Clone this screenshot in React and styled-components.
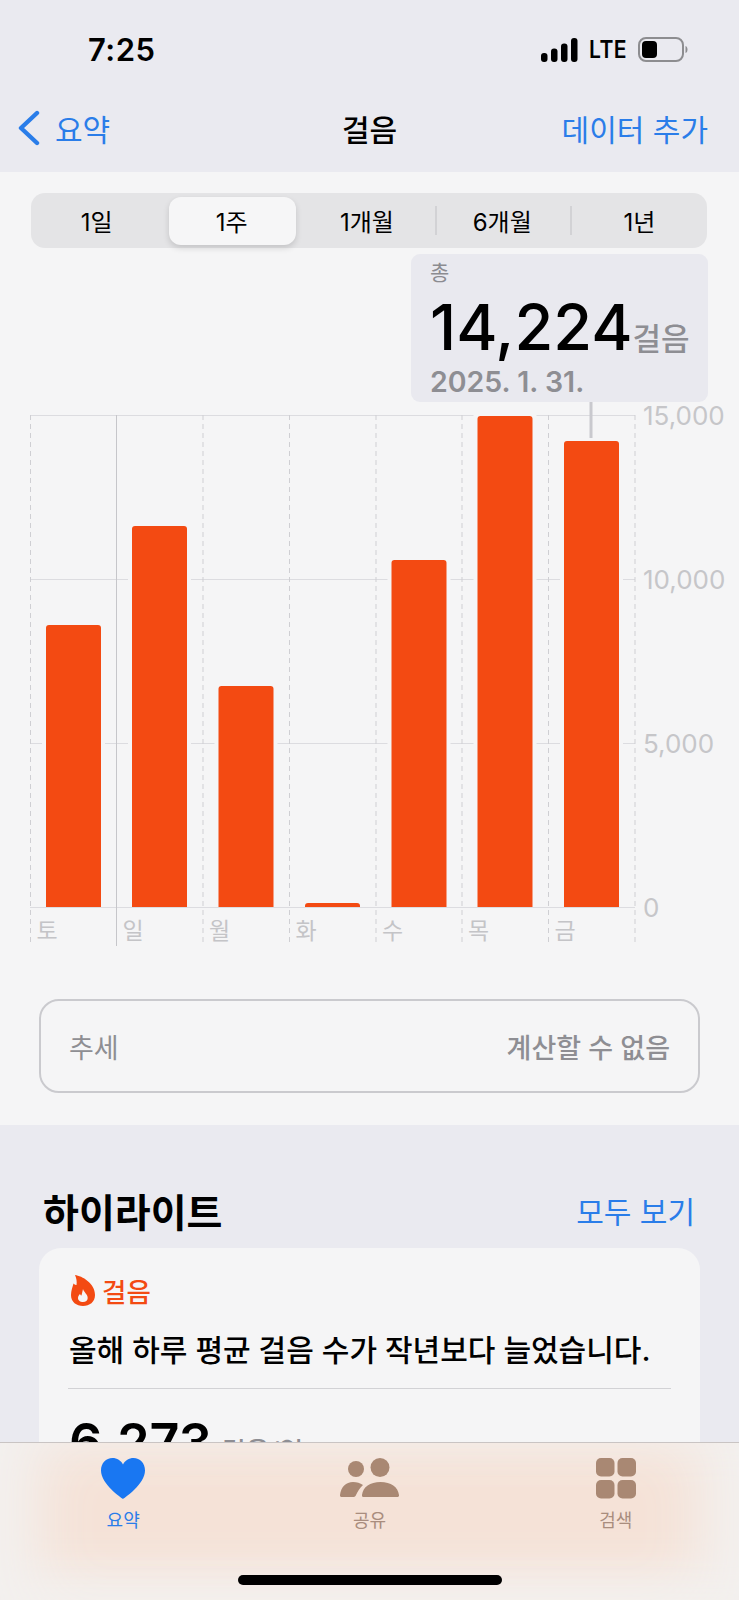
import React from "react";
import styled, { createGlobalStyle } from "styled-components";

const FONT = `Inter, "Noto Sans CJK KR", sans-serif`;
const BLUE = "#2a7de9";
const ORANGE = "#f34a12";
const PANEL = "#f5f5f6";

const GlobalStyle = createGlobalStyle`
  html, body {
    margin: 0;
    background: #eaeaf0;
  }
  body {
    font-family: ${FONT};
    color: #000;
  }
`;

const Phone = styled.div`
  position: relative;
  width: 739px;
  height: 1600px;
  overflow: hidden;
  background: #eaeaf0;
`;

const StatusBar = styled.div`
  display: flex;
  align-items: center;
  justify-content: space-between;
  height: 99px;
  padding: 0 51px 0 88px;
  box-sizing: border-box;
`;

const Time = styled.span`
  font-size: 31px;
  font-weight: 600;
  letter-spacing: 0.5px;
`;

const StatusRight = styled.div`
  display: flex;
  align-items: center;
  gap: 11px;
`;

const Lte = styled.span`
  font-size: 24px;
  font-weight: 600;
  letter-spacing: 0.5px;
  transform: scaleX(0.88);
  transform-origin: left center;
  width: 38px;
`;

const NavBar = styled.div`
  display: grid;
  grid-template-columns: 1fr auto 1fr;
  align-items: center;
  height: 73px;
  padding: 0 31px 15px;
  box-sizing: border-box;
`;

const BackLink = styled.div`
  display: flex;
  align-items: center;
  gap: 15px;
  margin-left: -14px;
  color: ${BLUE};
  font-size: 30px;
`;

const NavTitle = styled.div`
  font-size: 30px;
  font-weight: 500;
`;

const NavAction = styled.div`
  justify-self: end;
  color: ${BLUE};
  font-size: 30px;
`;

const ChartSection = styled.section`
  background: ${PANEL};
  padding: 21px 0 32px;
`;

const Segmented = styled.div`
  display: grid;
  grid-template-columns: repeat(5, 1fr);
  align-items: center;
  height: 55px;
  margin: 0 32px 0 31px;
  border-radius: 14px;
  background: #e4e4e6;
`;

const Segment = styled.div`
  position: relative;
  display: flex;
  align-items: center;
  justify-content: center;
  height: ${(p) => (p.$active ? "48px" : "100%")};
  margin: ${(p) => (p.$active ? "0 5px 0 3px" : "0")};
  padding-right: ${(p) => (p.$last ? "0" : p.$active ? "2px" : "4px")};
  border-radius: 12px;
  font-size: 24px;
  background: ${(p) => (p.$active ? "#f6f6f7" : "transparent")};
  box-shadow: ${(p) => (p.$active ? "0 3px 6px rgba(0,0,0,0.14)" : "none")};

  &::after {
    content: "";
    display: ${(p) => (p.$divider ? "block" : "none")};
    position: absolute;
    right: 0;
    top: 13px;
    bottom: 13px;
    width: 2px;
    background: #d2d2d5;
  }
`;

const ChartWrap = styled.div`
  position: relative;
  height: 700px;
`;

const Plot = styled.svg`
  display: block;
`;

const AxisLabel = styled.text`
  font-family: ${FONT};
  font-size: 26px;
  fill: #c6c6c9;
`;

const DayLabel = styled.text`
  font-family: ${FONT};
  font-size: 23px;
  fill: #c4c4c7;
`;

const Callout = styled.div`
  position: absolute;
  left: 411px;
  top: 6px;
  width: 297px;
  height: 148px;
  box-sizing: border-box;
  padding: 2px 0 0 19px;
  border-radius: 9px;
  background: #e9e9ef;
`;

const CalloutCaption = styled.div`
  font-size: 21px;
  line-height: 34px;
  color: #8b8b90;
`;

const CalloutValue = styled.div`
  display: flex;
  align-items: baseline;
  height: 70px;
  margin-top: 2px;
  line-height: 70px;
  font-size: 63px;
  font-weight: 500;
`;

const CalloutUnit = styled.span`
  font-size: 31px;
  font-weight: 500;
  color: #8e8e93;
`;

const CalloutDate = styled.div`
  font-size: 28.5px;
  line-height: 40px;
  font-weight: 600;
  color: #8e8e93;
`;

const TrendCard = styled.div`
  display: flex;
  align-items: center;
  justify-content: space-between;
  height: 94px;
  margin: 51px 39px 0;
  padding: 0 28px;
  box-sizing: border-box;
  border: 2px solid #cacace;
  border-radius: 20px;
  font-size: 27px;
  color: #8e8e93;
`;

const TrendValue = styled.span`
  font-weight: 500;
`;

const SectionHead = styled.div`
  display: flex;
  align-items: center;
  justify-content: space-between;
  height: 50px;
  padding: 60px 44px 13px 43px;
`;

const SectionTitle = styled.h2`
  margin: 0;
  font-size: 39px;
  font-weight: 700;
`;

const SectionLink = styled.span`
  color: ${BLUE};
  font-size: 30px;
`;

const HighlightCard = styled.div`
  margin: 0 39px;
  padding: 26px 29px 26px 30px;
  border-radius: 22px;
  background: ${PANEL};
`;

const CardTag = styled.div`
  display: flex;
  align-items: center;
  gap: 7px;
  height: 32px;
  margin-left: 2px;
  color: ${ORANGE};
  font-size: 26.5px;
  font-weight: 500;
`;

const CardText = styled.p`
  margin: 23px 0 0;
  font-size: 30px;
  line-height: 42px;
  font-weight: 500;
  white-space: nowrap;
`;

const CardDivider = styled.div`
  height: 1px;
  margin: 17px 0 0 -1px;
  background: #d2d2d5;
`;

const CardStat = styled.div`
  display: flex;
  align-items: baseline;
  gap: 10px;
  margin-top: 22px;
  font-size: 52px;
  font-weight: 600;
`;

const CardStatUnit = styled.span`
  font-size: 26px;
  font-weight: 500;
  color: #8e8e93;
`;

const TabBar = styled.nav`
  position: absolute;
  left: 0;
  right: 0;
  bottom: 0;
  height: 158px;
  box-sizing: border-box;
  border-top: 1px solid #c9c4c3;
  background: #f5e2d7;
  box-shadow:
    inset 50px 0 60px -10px #f3f0ee,
    inset -50px 0 60px -10px #f3f0ee,
    inset 0 -35px 50px -10px #f3f0ee;
`;

const Tabs = styled.div`
  display: grid;
  grid-template-columns: repeat(3, 1fr);
  padding-top: 15px;
`;

const Tab = styled.div`
  display: flex;
  flex-direction: column;
  align-items: center;
  gap: 9px;
  font-size: 18px;
  line-height: 26px;
  color: ${(p) => (p.$active ? BLUE : "#a98d7e")};
`;

const TabIcon = styled.svg`
  display: block;
  height: 41px;
`;

const HomeIndicator = styled.div`
  position: absolute;
  left: 238px;
  bottom: 15px;
  width: 264px;
  height: 10px;
  border-radius: 5px;
  background: #000;
`;

const SEGMENTS = ["1일", "1주", "1개월", "6개월", "1년"];
const DAYS = ["토", "일", "월", "화", "수", "목", "금"];
const BAR_TOPS = [625, 526, 686, 903, 560, 416, 441];
const BASE_Y = 907;
const GRID_X = [30.5, 116.5, 203, 289.5, 376, 462, 548.5, 635];
const GRID_Y = [415, 579, 743, 907];
const TICKS = ["15,000", "10,000", "5,000", "0"];

const StepChart = () => (
  <Plot width="739" height="700" viewBox="0 248 739 700">
    {GRID_Y.map((y) => (
      <line key={y} x1="30" x2="635" y1={y + 0.5} y2={y + 0.5} stroke="#dcdce0" strokeWidth="1" />
    ))}
    {GRID_X.map((x, i) => (
      <line
        key={x}
        x1={x}
        x2={x}
        y1="415"
        y2="946"
        stroke={i === 1 ? "#c6c6ca" : "#cfcfd3"}
        strokeWidth="1"
        strokeDasharray={i === 1 ? "none" : "5 4"}
      />
    ))}
    {BAR_TOPS.map((top, i) => {
      const x = GRID_X[i] + 15.5;
      return (
        <g key={DAYS[i]}>
          <rect x={x - 4} y={top - 4} width="63" height={BASE_Y - top + 4} fill={PANEL} />
          <path
            d={`M${x} ${BASE_Y}V${top + 3}q0-3 3-3h49q3 0 3 3V${BASE_Y}z`}
            fill={ORANGE}
          />
        </g>
      );
    })}
    <line x1="591" x2="591" y1="402" y2="438" stroke="#c9c9ce" strokeWidth="3" />
    {TICKS.map((t, i) => (
      <AxisLabel key={t} x="643" y={GRID_Y[i] + 10}>
        {t}
      </AxisLabel>
    ))}
    {DAYS.map((d, i) => (
      <DayLabel key={d} x={GRID_X[i] + 6} y="939">
        {d}
      </DayLabel>
    ))}
  </Plot>
);

const App = () => (
  <Phone>
    <GlobalStyle />
    <StatusBar>
      <Time>7:25</Time>
      <StatusRight>
        <svg width="37" height="24" viewBox="0 0 37 24">
          <rect x="0" y="15" width="6.5" height="9" rx="3" fill="#000" />
          <rect x="10" y="10.5" width="6.5" height="13.5" rx="3" fill="#000" />
          <rect x="20" y="5.5" width="6.5" height="18.5" rx="3" fill="#000" />
          <rect x="30" y="0" width="6.5" height="24" rx="3" fill="#000" />
        </svg>
        <Lte>LTE</Lte>
        <svg width="50" height="25" viewBox="0 0 50 25">
          <rect x="1" y="1" width="44" height="23" rx="7" fill="none" stroke="#8d8d90" strokeWidth="2" />
          <rect x="4" y="4" width="15" height="17" rx="4" fill="#000" />
          <path d="M47.5 9c1.5.5 2 2 2 3.5s-.5 3-2 3.5z" fill="#8d8d90" />
        </svg>
      </StatusRight>
    </StatusBar>

    <NavBar>
      <BackLink>
        <svg width="23" height="36" viewBox="0 0 23 36">
          <path d="M20 3 4 18l16 15" fill="none" stroke={BLUE} strokeWidth="4.4" strokeLinecap="round" strokeLinejoin="round" />
        </svg>
        요약
      </BackLink>
      <NavTitle>걸음</NavTitle>
      <NavAction>데이터 추가</NavAction>
    </NavBar>

    <ChartSection>
      <Segmented>
        {SEGMENTS.map((s, i) => (
          <Segment key={s} $active={i === 1} $divider={i === 2 || i === 3} $last={i === 4}>
            {s}
          </Segment>
        ))}
      </Segmented>

      <ChartWrap>
        <StepChart />
        <Callout>
          <CalloutCaption>총</CalloutCaption>
          <CalloutValue>
            14,224<CalloutUnit>걸음</CalloutUnit>
          </CalloutValue>
          <CalloutDate>2025. 1. 31.</CalloutDate>
        </Callout>
      </ChartWrap>

      <TrendCard>
        <span>추세</span>
        <TrendValue>계산할 수 없음</TrendValue>
      </TrendCard>
    </ChartSection>

    <SectionHead>
      <SectionTitle>하이라이트</SectionTitle>
      <SectionLink>모두 보기</SectionLink>
    </SectionHead>

    <HighlightCard>
      <CardTag>
        <svg width="24" height="31" viewBox="0 0 24 31">
          <path
            fill={ORANGE}
            d="M4 0C11 1 24 8 24 20 24 27 18.500 31 12 31 5.500 31 0 27 0 20 0 16 1.500 12 2.500 8.500 3.500 9.500 4.500 10 5.500 10 6 7 5.500 3 4 0z"
          />
          <path
            fill={PANEL}
            d="M12 14c.5 3 4.700 5 4.700 9 0 2.500-2 4-4.700 4s-5-1.500-5-4c0-2 1-3 2-4 .5 1 1 1.500 1.500 1.500.5-2 1-4.500 1.500-6.500z"
          />
        </svg>
        걸음
      </CardTag>
      <CardText>올해 하루 평균 걸음 수가 작년보다 늘었습니다.</CardText>
      <CardDivider />
      <CardStat>
        6,273<CardStatUnit>걸음/일</CardStatUnit>
      </CardStat>
    </HighlightCard>

    <TabBar>
      <Tabs>
        <Tab $active>
          <TabIcon width="44" viewBox="0 0 44 41">
            <path
              fill="#1977f2"
              d="M22 41C20 39.500 0 26 0 12.500 0 5 5 0 11.500 0 16 0 20 2.500 22 6.500 24 2.500 28 0 32.500 0 39 0 44 5 44 12.500 44 26 24 39.500 22 41z"
            />
          </TabIcon>
          요약
        </Tab>
        <Tab>
          <TabIcon width="59" viewBox="0 0 59 41">
            <g fill="#a98873">
              <circle cx="16" cy="11" r="8" />
              <circle cx="40" cy="9.500" r="9.500" />
              <path d="M0 37c1-8 6-13 13-13 4 0 7 1 10 3-3 3-5.500 6.500-7 10-.5 1.500-1.500 2-3 2H2c-1.500 0-2.200-.8-2-2z" />
              <path d="M22 37c1-8 8-13 18.500-13S58 29 59 37c.2 1.200-.5 2-2 2H24c-1.500 0-2.200-.8-2-2z" />
            </g>
          </TabIcon>
          공유
        </Tab>
        <Tab>
          <TabIcon width="40" viewBox="0 0 40 41">
            <g fill="#a98873">
              <rect x="0" y="0" width="18.500" height="18.500" rx="5" />
              <rect x="21.500" y="0" width="18.500" height="18.500" rx="5" />
              <rect x="0" y="22" width="18.500" height="18.500" rx="5" />
              <rect x="21.500" y="22" width="18.500" height="18.500" rx="5" />
            </g>
          </TabIcon>
          검색
        </Tab>
      </Tabs>
      <HomeIndicator />
    </TabBar>
  </Phone>
);

export default App;
